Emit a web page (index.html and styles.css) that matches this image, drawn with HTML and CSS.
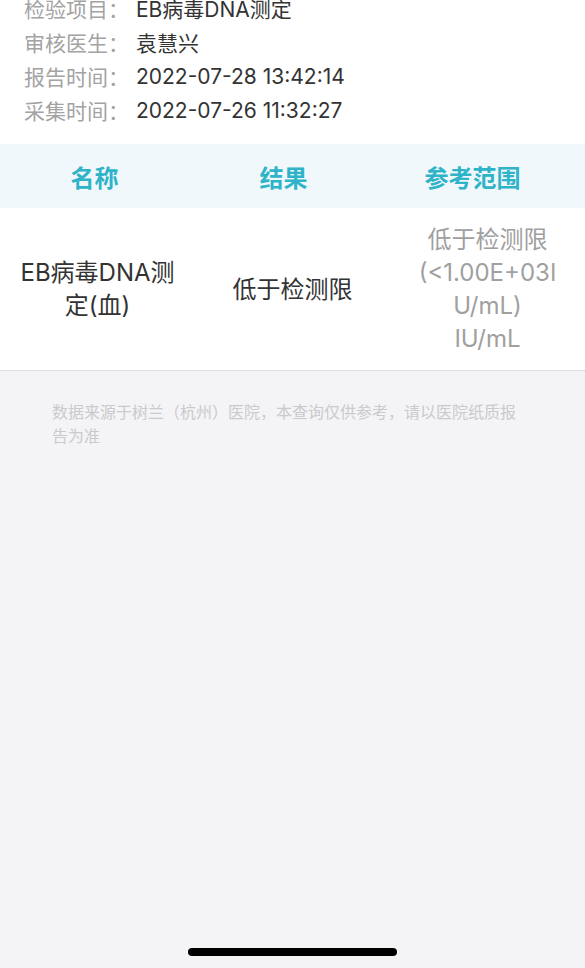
FILE: index.html
```html
<!DOCTYPE html>
<html lang="zh-CN">

<head>
    <meta charset="UTF-8">
    <title>检验报告</title>
    <link rel="stylesheet" href="styles.css">
</head>

<body>
    <div class="page">
        <section class="info">
            <div class="info-row">
                <span class="info-label">检验项目：</span>
                <span class="info-value">EB病毒DNA测定</span>
            </div>
            <div class="info-row">
                <span class="info-label">审核医生：</span>
                <span class="info-value">袁慧兴</span>
            </div>
            <div class="info-row">
                <span class="info-label">报告时间：</span>
                <span class="info-value">2022-07-28 13:42:14</span>
            </div>
            <div class="info-row">
                <span class="info-label">采集时间：</span>
                <span class="info-value">2022-07-26 11:32:27</span>
            </div>
        </section>

        <section class="result-table">
            <div class="table-head">
                <div class="head-cell">名称</div>
                <div class="head-cell">结果</div>
                <div class="head-cell">参考范围</div>
            </div>
            <div class="table-row">
                <div class="cell">EB病毒DNA测定(血)</div>
                <div class="cell">低于检测限</div>
                <div class="cell cell-range">
                    <span class="range-text">低于检测限(&lt;1.00E+03IU/mL)</span>
                    <span class="range-unit">IU/mL</span>
                </div>
            </div>
        </section>

        <p class="notice">数据来源于树兰（杭州）医院，本查询仅供参考，请以医院纸质报告为准</p>

        <div class="home-bar"></div>
    </div>
</body>

</html>
```

FILE: styles.css
```css
body {
    margin: 0;
    background-color: #f4f4f6;
    font-family: Inter, "Noto Sans CJK SC", sans-serif;
    overflow: hidden;
}

.page {
    height: 968px;
    display: flex;
    flex-direction: column;
}

.info {
    background-color: #fff;
    margin-top: -9px;
    padding: 0 24px 17px;
}

.info-row {
    display: flex;
    height: 34px;
    align-items: center;
    font-size: 21px;
}

.info-label {
    width: 112px;
    color: #a3a3a3;
}

.info-value {
    color: #333;
}

.table-head {
    display: grid;
    grid-template-columns: repeat(3, 1fr);
    height: 64px;
    align-items: center;
    padding-right: 18px;
    background-color: #f0f8fc;
}

.head-cell {
    text-align: center;
    font-size: 24px;
    font-weight: bold;
    color: #2fb3c9;
}

.table-row {
    display: grid;
    grid-template-columns: repeat(3, 1fr);
    align-items: center;
    padding: 15px 0;
    background-color: #fff;
    border-bottom: 1px solid #dedede;
}

.cell {
    padding: 0 18px;
    text-align: center;
    font-size: 24px;
    line-height: 33px;
    color: #333;
}

.cell-range {
    padding: 0 26px;
    color: #a0a0a0;
    overflow-wrap: anywhere;
}

.range-text,
.range-unit {
    display: block;
}

.notice {
    margin: 0;
    padding: 29px 62px 0 52px;
    font-size: 16px;
    line-height: 24px;
    color: #cacacd;
}

.home-bar {
    margin: auto auto 12px;
    width: 209px;
    height: 8px;
    border-radius: 4px;
    background-color: #000;
}
```
